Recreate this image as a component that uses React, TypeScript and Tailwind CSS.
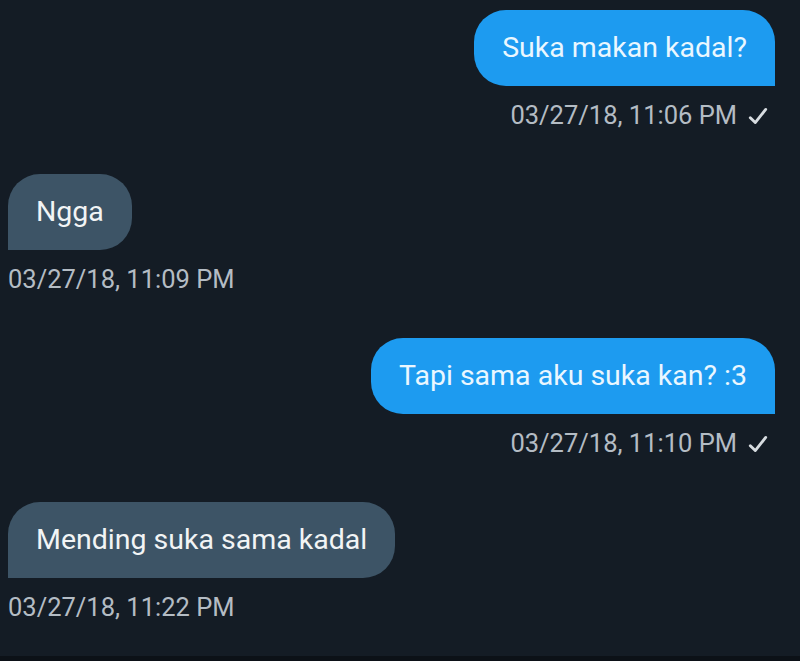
const messages = [
  { text: "Suka makan kadal?", time: "03/27/18, 11:06 PM", mine: true },
  { text: "Ngga", time: "03/27/18, 11:09 PM", mine: false },
  { text: "Tapi sama aku suka kan? :3", time: "03/27/18, 11:10 PM", mine: true },
  { text: "Mending suka sama kadal", time: "03/27/18, 11:22 PM", mine: false },
];

function Check() {
  return (
    <svg width="22" height="22" viewBox="0 0 20 20" className="ml-[10px] mt-[2px]">
      <path d="M3 11.5 L7.5 16 L17 4" fill="none" stroke="#d7dce0" strokeWidth="2.6" strokeLinecap="round" strokeLinejoin="round" />
    </svg>
  );
}

export default function App() {
  return (
    <div
      className="w-[800px] h-[661px] bg-[#141c25] flex flex-col overflow-hidden border-b-[5px] border-[#0c1117]"
      style={{ fontFamily: "Roboto, 'Liberation Sans', sans-serif" }}
    >
      <div className="flex flex-col pt-[10px] pl-2 pr-[25px]">
        {messages.map((m, i) => (
          <div key={i} className={`flex flex-col h-[164px] ${m.mine ? "items-end" : "items-start"}`}>
            <div
              className={`h-[76px] flex items-center pl-[28px] pr-[28px] text-[28.5px] ${
                m.mine
                  ? "bg-[#1d9bf0] text-[#eaf7ff] rounded-[32px] rounded-br-none"
                  : "bg-[#3d5466] text-[#f2f4f5] rounded-[32px] rounded-bl-none"
              }`}
            >
              {m.text}
            </div>
            <div className={`mt-[15px] h-[28px] flex items-center text-[25.5px] text-[#b4bcc4] ${m.mine ? "pr-[6px]" : ""}`}>
              <span>{m.time}</span>
              {m.mine && <Check />}
            </div>
          </div>
        ))}
      </div>
    </div>
  );
}
